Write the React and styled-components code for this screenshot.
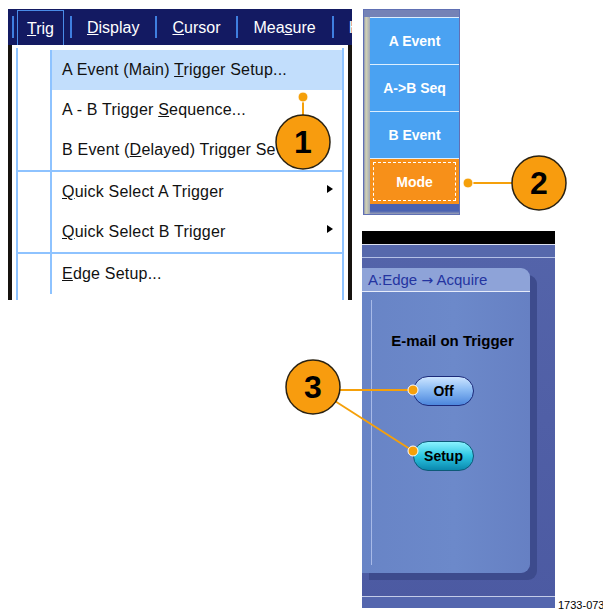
import React from "react";
import styled, { createGlobalStyle, css } from "styled-components";

const GlobalStyle = createGlobalStyle`
  html, body {
    margin: 0;
    padding: 0;
    background: #fff;
  }
  body {
    font-family: "Liberation Sans", Arial, sans-serif;
  }
`;

const Page = styled.div`
  position: relative;
  width: 603px;
  height: 612px;
  box-sizing: border-box;
  padding: 9px 0 0 8px;
  display: flex;
  gap: 10px;
  overflow: hidden;
`;

/* ---------- left: Trig menu screenshot ---------- */

const MenuShot = styled.div`
  width: 344px;
  height: 291px;
  display: flex;
  flex-direction: column;
  overflow: hidden;
  flex: none;
`;

const MenuBar = styled.div`
  height: 36px;
  flex: none;
  background: #131a62;
  display: flex;
  align-items: center;
  padding-left: 4px;
  color: #fff;
  font-size: 16px;
  white-space: nowrap;
  overflow: hidden;
`;

const BarDivider = styled.span`
  width: 2px;
  height: 22px;
  flex: none;
  background: #3f7fe0;
`;

const BarItem = styled.span`
  flex: none;
  padding: 0 16px 0 15px;
  line-height: 35px;

  ${({ $active }) =>
    $active &&
    css`
      align-self: flex-end;
      height: 35px;
      box-sizing: border-box;
      border: 1px solid #4a8ce8;
      border-bottom: none;
      padding: 0 9px;
      margin: 0 6px 0 3px;
    `}
`;

const Dropdown = styled.div`
  flex: 1;
  background: #fff;
  border-left: 4px solid #17130f;
  border-right: 4px solid #17130f;
  padding: 3px 4px 0 4px;
  min-height: 0;
`;

const MenuList = styled.div`
  height: 100%;
  box-sizing: border-box;
  padding-top: 2px;
  border-left: 2px solid #8ec3ff;
  border-right: 2px solid #8ec3ff;
  font-size: 16px;
  letter-spacing: 0.2px;
  color: #111;
  white-space: nowrap;
`;

const MenuGroup = styled.div`
  ${({ $divided }) =>
    $divided &&
    css`
      border-top: 2px solid #8ec3ff;
    `}
`;

const MenuRow = styled.div`
  display: flex;
  height: 40px;
`;

const IconCell = styled.div`
  width: 32px;
  flex: none;
  border-right: 2px solid #8ec3ff;
`;

const RowLabel = styled.div`
  flex: 1;
  display: flex;
  align-items: center;
  justify-content: space-between;
  padding: 0 9px 0 10px;
  overflow: hidden;
  background: ${({ $highlight }) => ($highlight ? "#c2defc" : "transparent")};
`;

const SubArrow = styled.span`
  width: 0;
  height: 0;
  margin-bottom: 6px;
  border-left: 6px solid #000;
  border-top: 4px solid transparent;
  border-bottom: 4px solid transparent;
`;

/* ---------- right column ---------- */

const RightColumn = styled.div`
  display: flex;
  flex-direction: column;
  gap: 16px;
`;

const SoftPanel = styled.div`
  margin-left: 1px;
  width: 97px;
  height: 206px;
  box-sizing: border-box;
  border: 1px solid #6070b4;
  padding: 7px 0 0 6px;
  display: flex;
  flex-direction: column;
  background: linear-gradient(90deg, #8e94ae 0, #d4d4b4 2px, #a2a8b8 6px);
  box-shadow: inset 0 7px 0 #7482b6;
`;

const SoftButton = styled.div`
  height: 47px;
  box-sizing: border-box;
  border-top: 1px solid #dcefff;
  background: ${({ $mode }) => ($mode ? "#f79019" : "#4aa2f2")};
  color: #fff;
  font-weight: bold;
  font-size: 14px;
  display: flex;
  align-items: center;
  justify-content: center;
  padding: 3px;

  ${({ $mode }) =>
    $mode &&
    css`
      height: 46px;
    `}
`;

const FocusRing = styled.span`
  flex: 1;
  align-self: stretch;
  border: 1px dashed #fff;
  display: flex;
  align-items: center;
  justify-content: center;
`;

const SoftFooter = styled.div`
  flex: 1;
  background: linear-gradient(180deg, #4a62b2 0, #4a62b2 70%, #9aa0b6 100%);
`;

const AcquireRow = styled.div`
  display: flex;
  align-items: flex-end;
  gap: 3px;
`;

const AcqPanel = styled.div`
  width: 193px;
  height: 377px;
  flex: none;
  display: flex;
  flex-direction: column;
  background: linear-gradient(180deg, #5464aa 0, #4c5aa2 100%);
`;

const BlackBar = styled.div`
  height: 13px;
  background: #000;
  border-bottom: 1px solid #dce0f0;
`;

const TopBand = styled.div`
  height: 12px;
  background: #5668ac;
  border-bottom: 1px solid #b4c0e6;
`;

const CardArea = styled.div`
  padding: 10px 25px 23px 0;
`;

const Card = styled.div`
  height: 305px;
  display: flex;
  flex-direction: column;
  border-radius: 0 9px 9px 0;
  box-shadow: 7px 7px 0 #3d4b8d;
`;

const CardTab = styled.div`
  height: 23px;
  flex: none;
  background: #8ea3d8;
  border-radius: 0 9px 0 0;
  border-bottom: 1px solid #e6ecfa;
  color: #2434a0;
  font-size: 15px;
  line-height: 23px;
  padding-left: 6px;
  white-space: nowrap;
`;

const Arrow = styled.span`
  font-family: "DejaVu Sans", sans-serif;
  font-size: 14px;
`;

const CardBody = styled.div`
  flex: 1;
  border-radius: 0 0 9px 0;
  background: linear-gradient(90deg, #6884c6 0, #6c89ca 55%, #6680c3 100%);
  padding: 8px 0 8px 9px;
  display: flex;
`;

const CardInner = styled.div`
  flex: 1;
  border-left: 1px solid #a8bae8;
  display: flex;
  flex-direction: column;
`;

const CardTitle = styled.div`
  margin-top: 32px;
  padding-left: 3px;
  text-align: center;
  font-weight: bold;
  font-size: 15px;
  line-height: 18px;
  color: #000;
`;

const PillButton = styled.div`
  width: 61px;
  height: 30px;
  box-sizing: border-box;
  margin: ${({ $gap }) => $gap}px 0 0 41px;
  border-radius: 15px;
  border: 1.5px solid ${({ $teal }) => ($teal ? "#0c5a78" : "#1c2a7a")};
  background: ${({ $teal }) =>
    $teal
      ? "linear-gradient(180deg, #8af2ff 0%, #2cc6e2 50%, #0a88ae 100%)"
      : "linear-gradient(180deg, #cce4ff 0%, #8cbcf4 45%, #4c86dc 100%)"};
  display: flex;
  align-items: center;
  justify-content: center;
  font-weight: bold;
  font-size: 14px;
  color: #000;
`;

const PanelFoot = styled.div`
  margin-top: auto;
  height: 11px;
  background: #5466ae;
  border-top: 1px solid #c4cce8;
`;

const FigureId = styled.span`
  font-size: 11px;
  line-height: 11px;
  margin-bottom: -3px;
  color: #000;
  white-space: nowrap;
`;

/* ---------- callouts ---------- */

const CalloutLayer = styled.svg`
  position: absolute;
  left: 0;
  top: 0;
  pointer-events: none;
`;

const LEAD = "#f5a00a";

const Callout = ({ x, y, n }) => (
  <g>
    <circle cx={x} cy={y} r="27" fill="#f89c0e" stroke="#2a2212" strokeWidth="1.5" />
    <text
      x={x}
      y={y + 11}
      textAnchor="middle"
      fontFamily="Liberation Sans, Arial, sans-serif"
      fontWeight="bold"
      fontSize="32"
      fill="#000"
    >
      {n}
    </text>
  </g>
);

const Leader = ({ x1, y1, x2, y2 }) => (
  <g>
    <line x1={x1} y1={y1} x2={x2} y2={y2} stroke={LEAD} strokeWidth="2" />
    <circle cx={x2} cy={y2} r="5" fill={LEAD} stroke="#fff" strokeWidth="1" />
  </g>
);

const menuGroups = [
  [
    { label: <>A Event (Main) <u>T</u>rigger Setup...</>, highlight: true },
    { label: <>A - B Trigger <u>S</u>equence...</> },
    { label: <>B Event (<u>D</u>elayed) Trigger Se</> },
  ],
  [
    { label: <><u>Q</u>uick Select A Trigger</>, sub: true },
    { label: <><u>Q</u>uick Select B Trigger</>, sub: true },
  ],
  [{ label: <><u>E</u>dge Setup...</> }],
];

const softKeys = ["A Event", "A->B Seq", "B Event"];

export default function App() {
  return (
    <>
      <GlobalStyle />
      <Page>
        <MenuShot>
          <MenuBar>
            <BarDivider />
            <BarItem $active>
              <u>T</u>rig
            </BarItem>
            <BarDivider />
            <BarItem>
              <u>D</u>isplay
            </BarItem>
            <BarDivider />
            <BarItem>
              <u>C</u>ursor
            </BarItem>
            <BarDivider />
            <BarItem>
              Mea<u>s</u>ure
            </BarItem>
            <BarDivider />
            <BarItem>H</BarItem>
          </MenuBar>
          <Dropdown>
            <MenuList>
              {menuGroups.map((group, gi) => (
                <MenuGroup key={gi} $divided={gi > 0}>
                  {group.map((item, i) => (
                    <MenuRow key={i}>
                      <IconCell />
                      <RowLabel $highlight={item.highlight}>
                        <span>{item.label}</span>
                        {item.sub && <SubArrow />}
                      </RowLabel>
                    </MenuRow>
                  ))}
                </MenuGroup>
              ))}
            </MenuList>
          </Dropdown>
        </MenuShot>

        <RightColumn>
          <SoftPanel>
            {softKeys.map((k) => (
              <SoftButton key={k}>{k}</SoftButton>
            ))}
            <SoftButton $mode>
              <FocusRing>Mode</FocusRing>
            </SoftButton>
            <SoftFooter />
          </SoftPanel>

          <AcquireRow>
            <AcqPanel>
              <BlackBar />
              <TopBand />
              <CardArea>
                <Card>
                  <CardTab>
                    A:Edge <Arrow>→</Arrow> Acquire
                  </CardTab>
                  <CardBody>
                    <CardInner>
                      <CardTitle>E-mail on Trigger</CardTitle>
                      <PillButton $gap={26}>Off</PillButton>
                      <PillButton $gap={35} $teal>
                        Setup
                      </PillButton>
                    </CardInner>
                  </CardBody>
                </Card>
              </CardArea>
              <PanelFoot />
            </AcqPanel>
            <FigureId>1733-073</FigureId>
          </AcquireRow>
        </RightColumn>

        <CalloutLayer width="603" height="612" viewBox="0 0 603 612">
          <Leader x1={303} y1={142} x2={303} y2={97} />
          <Leader x1={539} y1={183} x2={468} y2={183} />
          <Leader x1={313} y1={390} x2={413} y2={390} />
          <Leader x1={313} y1={387} x2={413} y2={451} />
          <Callout x={303} y={142} n="1" />
          <Callout x={539} y={183} n="2" />
          <Callout x={313} y={387} n="3" />
        </CalloutLayer>
      </Page>
    </>
  );
}
